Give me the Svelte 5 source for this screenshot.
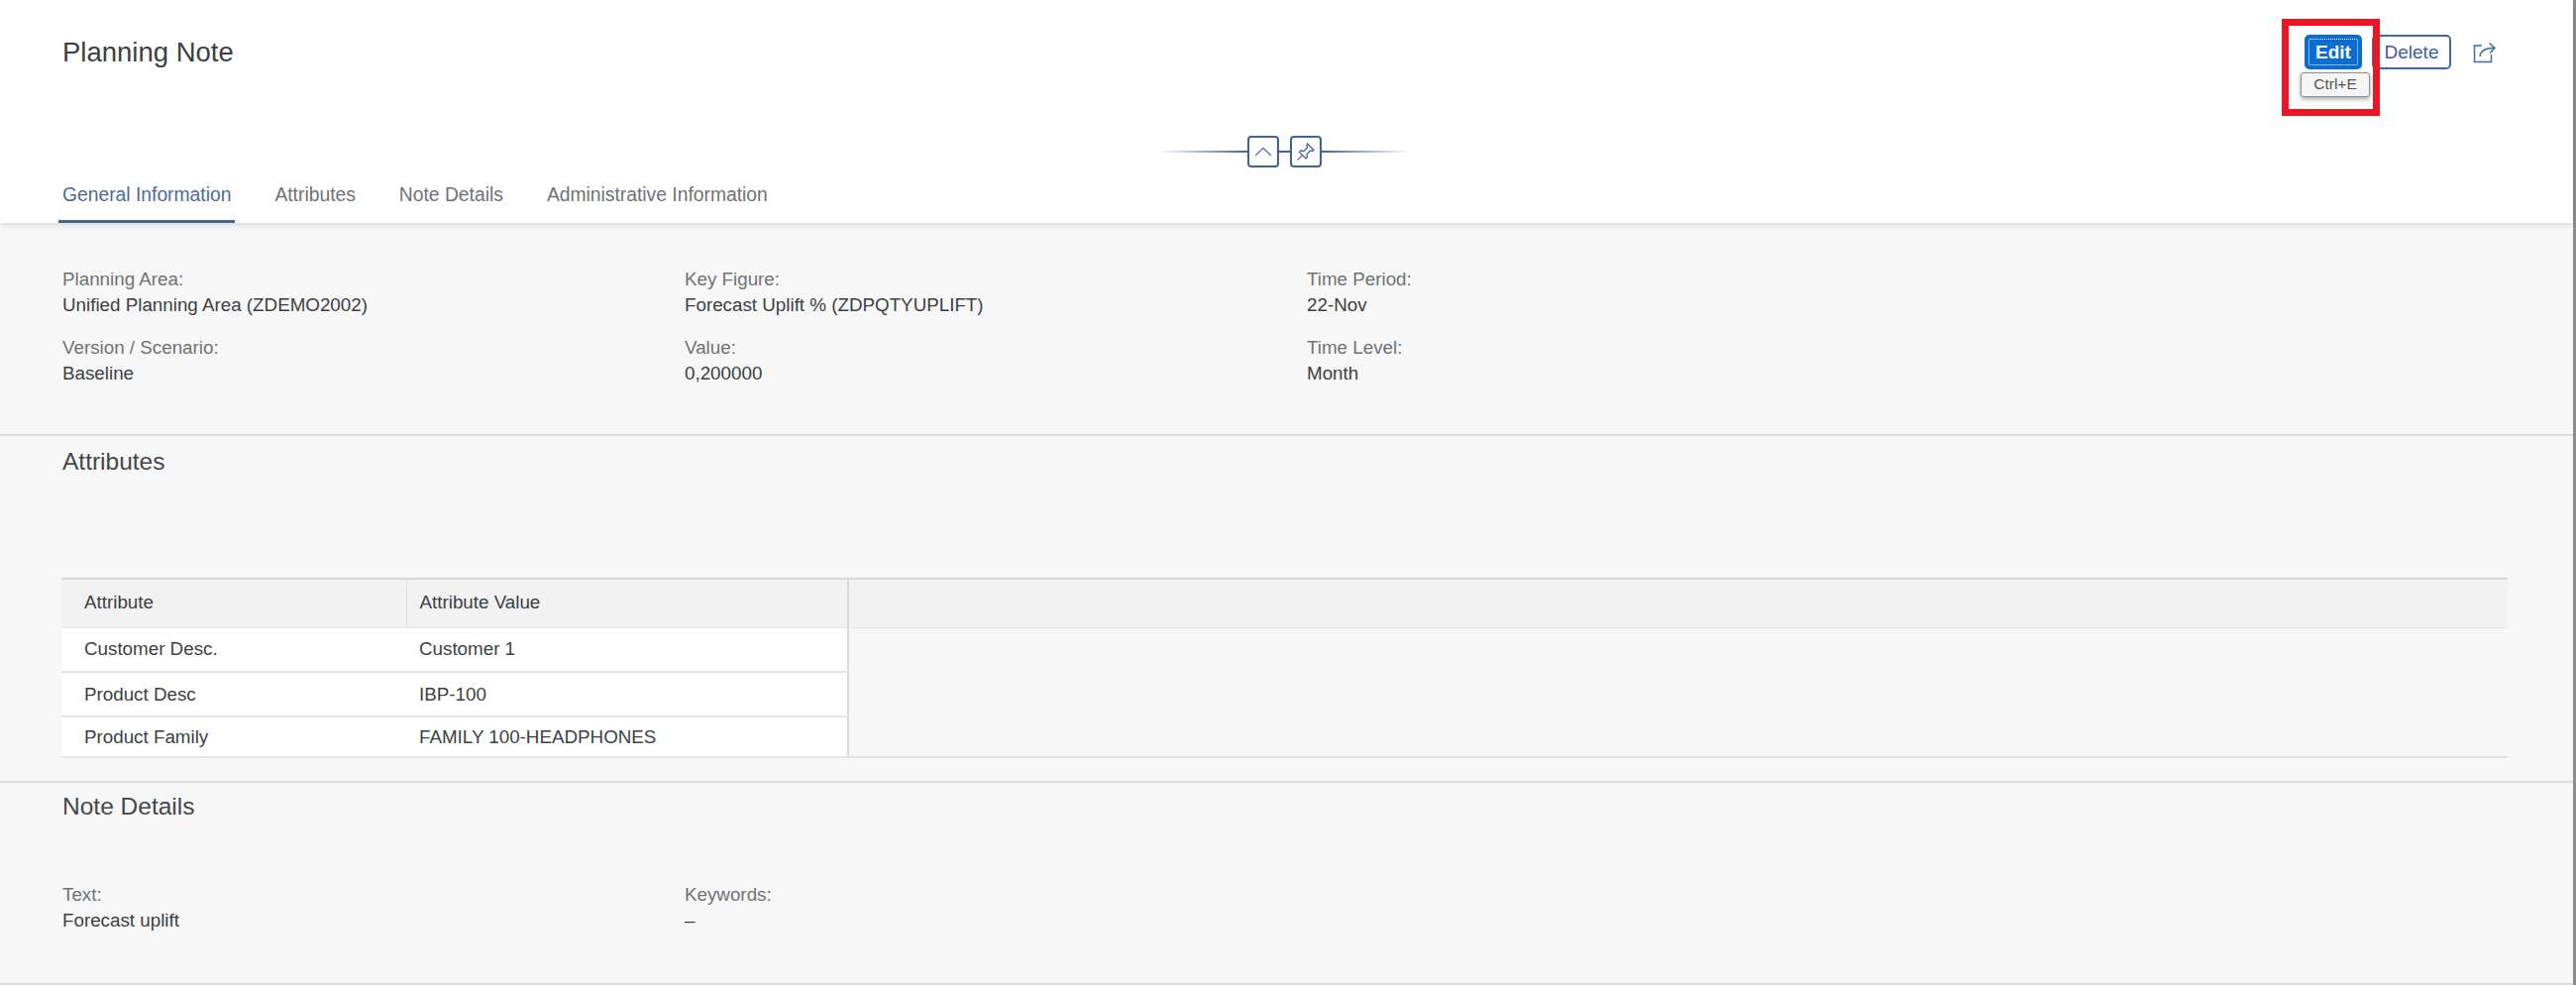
<script>
  const tabs = ["General Information", "Attributes", "Note Details", "Administrative Information"];

  const general = [
    { label: "Planning Area:", value: "Unified Planning Area (ZDEMO2002)" },
    { label: "Key Figure:", value: "Forecast Uplift % (ZDPQTYUPLIFT)" },
    { label: "Time Period:", value: "22-Nov" },
    { label: "Version / Scenario:", value: "Baseline" },
    { label: "Value:", value: "0,200000" },
    { label: "Time Level:", value: "Month" }
  ];

  const attributes = [
    { name: "Customer Desc.", value: "Customer 1", height: 45 },
    { name: "Product Desc", value: "IBP-100", height: 45 },
    { name: "Product Family", value: "FAMILY 100-HEADPHONES", height: 41 }
  ];

  const notes = [
    { label: "Text:", value: "Forecast uplift" },
    { label: "Keywords:", value: "–" }
  ];
</script>

<div class="page">
  <main class="content">
    <header class="head">
      <div class="title-row">
        <h1>Planning Note</h1>
        <div class="actions">
          <button class="btn primary"><span>Edit</span></button>
          <button class="btn">Delete</button>
          <button class="share" aria-label="Share">
            <svg width="24" height="22" viewBox="0 0 24 22" fill="none" stroke="#44689f" stroke-width="1.5">
              <path d="M9 4H1.5v16.5h17V13" />
              <path d="M7 15c.5-5 4-8.500 14-8.500" />
              <path d="M16.500 1.500 22 6.500 17 11.500" />
            </svg>
          </button>
        </div>
      </div>

      <div class="toggle">
        <i class="line left"></i>
        <button class="tg" aria-label="Collapse">
          <svg width="18" height="10" viewBox="0 0 18 10" fill="none" stroke="#6a7a90" stroke-width="1.4">
            <path d="M1 9 9 1.500 17 9" />
          </svg>
        </button>
        <i class="line mid"></i>
        <button class="tg" aria-label="Pin">
          <svg width="20" height="20" viewBox="0 0 20 20" fill="none" stroke="#44689f" stroke-width="1.3">
            <path d="M11.500 2 18 8.500 16.500 9.500 14.500 9 11 12.500 11.500 15.500 10 17 3.500 10.500 5 9 8 9.500 11.500 6 11 3.500Z" />
            <path d="M6.500 13.500 1.500 18.500" stroke="#6a7a90" />
          </svg>
        </button>
        <i class="line right"></i>
      </div>

      <nav class="tabs">
        {#each tabs as tab, i}
          <span class="tab" class:active={i === 0}>{tab}</span>
        {/each}
      </nav>
    </header>

    <section class="general">
      <div class="fields">
        {#each general as f}
          <div class="field">
            <div class="label">{f.label}</div>
            <div class="value">{f.value}</div>
          </div>
        {/each}
      </div>
    </section>

    <section class="attrs">
      <h2>Attributes</h2>
      <table>
        <thead>
          <tr>
            <th class="c1">Attribute</th>
            <th class="c2">Attribute Value</th>
            <th class="filler"></th>
          </tr>
        </thead>
        <tbody>
          {#each attributes as row}
            <tr style="height: {row.height}px">
              <td class="c1">{row.name}</td>
              <td class="c2">{row.value}</td>
              <td class="filler"></td>
            </tr>
          {/each}
        </tbody>
      </table>
    </section>

    <section class="notes">
      <h2>Note Details</h2>
      <div class="fields">
        {#each notes as f}
          <div class="field">
            <div class="label">{f.label}</div>
            <div class="value">{f.value}</div>
          </div>
        {/each}
      </div>
    </section>

    <div class="callout">
      <div class="tooltip">Ctrl+E</div>
    </div>
  </main>
  <div class="scrollbar"></div>
</div>

<style>
  :global(body) {
    margin: 0;
    background: #f7f7f7;
  }

  .page {
    display: flex;
    height: 994px;
    overflow: hidden;
    font-family: "Liberation Sans", Arial, sans-serif;
    font-size: 18.8px;
    line-height: 25px;
    color: #3b3f44;
  }

  .content {
    position: relative;
    flex: 1;
    min-width: 0;
    background: #f7f7f7;
  }

  .scrollbar {
    width: 3px;
    background: #8c8c8c;
  }

  .head {
    background: #fff;
    height: 225px;
    box-shadow: 0 2px 5px rgba(0, 0, 0, 0.12);
    position: relative;
  }

  .title-row {
    display: flex;
    justify-content: space-between;
    align-items: center;
    height: 35px;
    padding: 35px 77px 0 63px;
  }

  h1 {
    margin: 0;
    font-size: 27.500px;
    font-weight: 400;
    line-height: 33px;
    color: #3b3f44;
  }

  h2 {
    margin: 0;
    font-size: 24.500px;
    font-weight: 400;
    line-height: 30px;
    color: #43474c;
  }

  .actions {
    display: flex;
    align-items: center;
  }

  .btn {
    box-sizing: border-box;
    height: 35px;
    width: 80px;
    margin-left: 10px;
    padding: 0;
    background: #fff;
    border: 2px solid #41699f;
    border-radius: 5px;
    font: inherit;
    font-size: 19px;
    color: #3f5f94;
  }

  .btn.primary {
    width: 58px;
    padding: 2px;
    background: #0a6ed1;
    border-color: #0a6ed1;
    color: #fff;
    font-weight: 700;
  }

  .btn.primary span {
    display: flex;
    align-items: center;
    justify-content: center;
    height: 100%;
    border: 1px dotted #fff;
    border-radius: 2px;
    box-sizing: border-box;
  }

  .share {
    display: flex;
    margin-left: 22px;
    padding: 0;
    border: 0;
    background: none;
  }

  .toggle {
    display: flex;
    align-items: center;
    justify-content: center;
    margin-top: 67px;
    height: 32px;
    padding-right: 5px;
  }

  .line {
    display: block;
    height: 2px;
    background: #3f6399;
  }

  .line.left {
    width: 89px;
    background: linear-gradient(to right, rgba(63, 99, 153, 0), #3f6399);
  }

  .line.right {
    width: 89px;
    background: linear-gradient(to left, rgba(63, 99, 153, 0), #3f6399);
  }

  .line.mid {
    width: 11px;
  }

  .tg {
    display: flex;
    align-items: center;
    justify-content: center;
    box-sizing: border-box;
    width: 32px;
    height: 32px;
    padding: 0;
    background: #fff;
    border: 2px solid #3f6399;
    border-radius: 4px;
  }

  .tabs {
    display: flex;
    gap: 36px;
    height: 56px;
    padding-left: 59px;
    box-sizing: border-box;
    font-size: 19.300px;
  }

  .tab {
    box-sizing: border-box;
    height: 56px;
    padding: 15px 4px 0;
    color: #6f7276;
  }

  .tab.active {
    color: #4d6a96;
    border-bottom: 3px solid #47648f;
  }

  .fields {
    display: grid;
    grid-template-columns: repeat(3, 628px);
    row-gap: 19px;
    padding-left: 63px;
  }

  .label {
    color: #6f7276;
    margin-bottom: 1px;
    margin-top: -1px;
  }

  .value {
    color: #3b3f44;
  }

  .general {
    box-sizing: border-box;
    height: 215px;
    padding-top: 45px;
    border-bottom: 2px solid #dcdcdc;
  }

  .attrs {
    box-sizing: border-box;
    height: 350px;
    padding-top: 11px;
    border-bottom: 2px solid #dcdcdc;
  }

  .attrs h2 {
    padding-left: 63px;
  }

  table {
    box-sizing: border-box;
    width: 2469px;
    margin: 102px 0 0 62px;
    border-collapse: collapse;
    table-layout: fixed;
    border-top: 2px solid #d9d9d9;
    border-bottom: 2px solid #e3e3e3;
  }

  th {
    height: 49px;
    padding: 0 0 2px;
    box-sizing: border-box;
    background: #f2f2f2;
    font-weight: 400;
    text-align: left;
    color: #3b3f44;
    border-bottom: 1px solid #e5e5e5;
  }

  td {
    padding: 0 0 1px;
    background: #fff;
    border-bottom: 2px solid #e5e5e5;
  }

  .c1 {
    width: 348px;
    padding-left: 23px;
    box-sizing: border-box;
  }

  th.c1 {
    border-right: 1px solid #e0e0e0;
  }

  .c2 {
    width: 446px;
    padding-left: 13px;
    box-sizing: border-box;
    border-right: 2px solid #d9d9d9;
  }

  td.filler {
    background: #f7f7f7;
    border-bottom: 0;
  }

  .notes {
    box-sizing: border-box;
    height: 204px;
    padding-top: 9px;
    border-bottom: 2px solid #dcdcdc;
  }

  .notes h2 {
    padding-left: 63px;
    margin-bottom: 62px;
  }

  /* red annotation drawn over the toolbar */
  .callout {
    position: absolute;
    left: 2303px;
    top: 19px;
    box-sizing: border-box;
    width: 99px;
    height: 98px;
    border: 7px solid #ec1623;
  }

  .tooltip {
    position: absolute;
    left: 12px;
    top: 47px;
    box-sizing: border-box;
    width: 70px;
    height: 25px;
    background: #f5f5f5;
    border: 1px solid #8f8f8f;
    border-radius: 3px;
    box-shadow: 0 2px 5px rgba(0, 0, 0, 0.35);
    font-size: 15.500px;
    line-height: 22px;
    text-align: center;
    color: #555;
  }
</style>
